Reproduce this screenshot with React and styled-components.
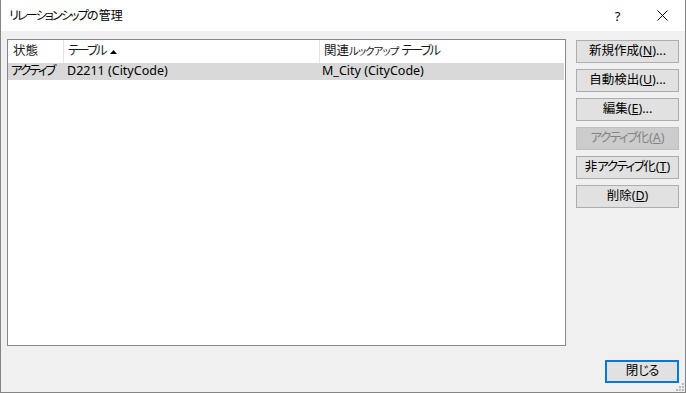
import React from "react";
import styled, { createGlobalStyle, css } from "styled-components";

const GlobalStyle = createGlobalStyle`
  html, body { margin: 0; padding: 0; background: #ffffff; }
  body {
    font-family: "Noto Sans", "Noto Sans CJK JP", sans-serif;
    font-size: 12px;
    font-feature-settings: "palt";
    color: #000;
  }
  * { box-sizing: border-box; }
`;

const Window = styled.div`
  position: relative;
  width: 686px;
  height: 393px;
  display: flex;
  flex-direction: column;
  background: #f0f0f0;
  border: 1px solid #858585;
  border-top: none;
`;

const TitleBar = styled.div`
  height: 31px;
  flex: none;
  display: flex;
  align-items: center;
  background: #ffffff;
`;

const Title = styled.div`
  flex: 1;
  padding-left: 8px;
  font-size: 12px;
  line-height: 1;
`;

const Kana = styled.span`
  letter-spacing: ${(p) => p.$ls ?? -2}px;
`;

const TitleButton = styled.div`
  width: 45px;
  height: 31px;
  display: flex;
  align-items: center;
  justify-content: center;
  font-size: 13px;
  color: #000;
`;

const Body = styled.div`
  flex: 1;
  min-height: 0;
  display: flex;
  flex-direction: column;
  padding: 8px 6px 9px 6px;
  font-size: 12.5px;
`;

const Main = styled.div`
  flex: 1;
  min-height: 0;
  display: flex;
  gap: 10px;
`;

const ListBox = styled.div`
  flex: 1;
  background: #ffffff;
  border: 1px solid #828790;
`;

const Row = styled.div`
  display: grid;
  grid-template-columns: 56px 256px 1fr;
  align-items: stretch;
`;

const HeaderRow = styled(Row)`
  height: 23px;
`;

const DataRow = styled(Row)`
  height: 17px;
  margin-right: 1px;
  background: ${(p) => (p.$selected ? "#d9d9d9" : "transparent")};
`;

const HeaderCell = styled.div`
  display: flex;
  align-items: center;
  gap: 4px;
  padding-left: ${(p) => p.$pad || 4}px;
  border-right: ${(p) => (p.$last ? "none" : "1px solid #e5e5e5")};
  white-space: nowrap;
  line-height: 1;
  color: #1a1a1a;
`;

const Small = styled.span`
  font-size: 10.5px;
  letter-spacing: -1px;
`;

const Cell = styled.div`
  display: flex;
  align-items: center;
  padding-left: ${(p) => p.$pad || 2}px;
  white-space: nowrap;
  line-height: 1;
  color: #000;
`;

const ButtonColumn = styled.div`
  width: 103px;
  flex: none;
  display: flex;
  flex-direction: column;
  gap: 6px;
  padding-top: 1px;
`;

const Button = styled.button`
  height: 23px;
  padding: 0;
  display: flex;
  align-items: center;
  justify-content: center;
  font-family: inherit;
  font-size: 12.5px;
  line-height: 1;
  font-feature-settings: "palt";
  color: #000;
  background: #e1e1e1;
  border: 1px solid #adadad;
  ${(p) =>
    p.disabled &&
    css`
      color: #838383;
      background: #cccccc;
      border-color: #bfbfbf;
    `}
`;

const Footer = styled.div`
  flex: none;
  display: flex;
  justify-content: flex-end;
  margin-top: 14px;
`;

const CloseButton = styled(Button)`
  width: 74px;
  border: 2px solid #0078d7;
`;

const Grip = styled.svg`
  position: absolute;
  right: 1px;
  bottom: 1px;
`;

const SortArrow = () => (
  <svg width="7" height="4" viewBox="0 0 7 4">
    <path d="M0 4 L3.5 0 L7 4 Z" fill="#000" />
  </svg>
);

const XIcon = () => (
  <svg width="11" height="11" viewBox="0 0 11 11">
    <path d="M0.5 0.5 L10.5 10.5 M10.5 0.5 L0.5 10.5" stroke="#000" strokeWidth="1" />
  </svg>
);

const buttons = [
  { pre: "新規作成", key: "N", tail: "..." },
  { pre: "自動検出", key: "U", tail: "..." },
  { pre: "編集", key: "E", tail: "..." },
  { kana: "アクティブ", post: "化", key: "A", tail: "", disabled: true },
  { pre: "非", kana: "アクティブ", post: "化", key: "T", tail: "" },
  { pre: "削除", key: "D", tail: "" },
];

export default function App() {
  return (
    <>
      <GlobalStyle />
      <Window>
        <TitleBar>
          <Title>
            <Kana $ls={-1.8}>リレーションシップ</Kana>の管理
          </Title>
          <TitleButton>?</TitleButton>
          <TitleButton>
            <XIcon />
          </TitleButton>
        </TitleBar>
        <Body>
          <Main>
            <ListBox>
              <HeaderRow>
                <HeaderCell $pad={5}>状態</HeaderCell>
                <HeaderCell>
                  <Kana>テーブル</Kana>
                  <SortArrow />
                </HeaderCell>
                <HeaderCell $last>
                  <span>
                    関連<Small>ルックアップ</Small> <Kana>テーブル</Kana>
                  </span>
                </HeaderCell>
              </HeaderRow>
              <DataRow $selected>
                <Cell $pad={3}>
                  <Kana>アクティブ</Kana>
                </Cell>
                <Cell $pad={3}>D2211 (CityCode)</Cell>
                <Cell $pad={2}>M_City (CityCode)</Cell>
              </DataRow>
            </ListBox>
            <ButtonColumn>
              {buttons.map((b) => (
                <Button key={b.key} disabled={b.disabled}>
                  {b.pre}
                  {b.kana && <Kana $ls={-1.5}>{b.kana}</Kana>}
                  {b.post}(<u>{b.key}</u>){b.tail}
                </Button>
              ))}
            </ButtonColumn>
          </Main>
          <Footer>
            <CloseButton>
              閉<Kana $ls={-1}>じる</Kana>
            </CloseButton>
          </Footer>
        </Body>
        <Grip width="9" height="9" viewBox="0 0 9 9">
          <rect x="7" y="1" width="2" height="2" fill="#b8b8b8" />
          <rect x="4" y="4" width="2" height="2" fill="#b8b8b8" />
          <rect x="7" y="4" width="2" height="2" fill="#b8b8b8" />
          <rect x="1" y="7" width="2" height="2" fill="#b8b8b8" />
          <rect x="4" y="7" width="2" height="2" fill="#b8b8b8" />
          <rect x="7" y="7" width="2" height="2" fill="#b8b8b8" />
        </Grip>
      </Window>
    </>
  );
}
